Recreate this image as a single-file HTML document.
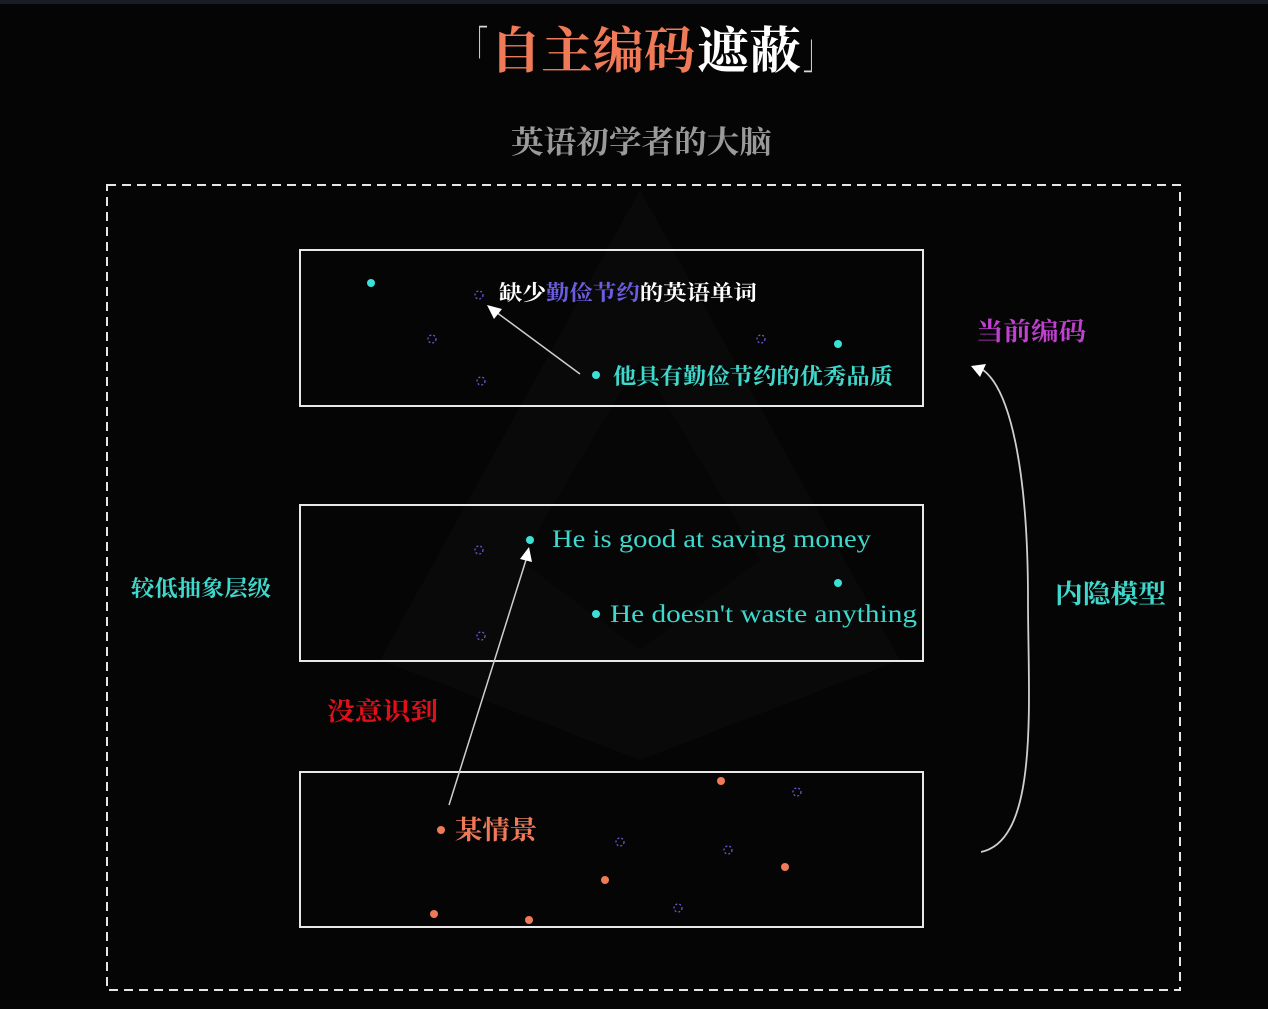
<!DOCTYPE html>
<html><head><meta charset="utf-8"><style>
html,body{margin:0;padding:0;background:#050505;}
svg{display:block}
text{font-family:"Liberation Serif","Noto Serif CJK SC",serif;font-weight:bold}
</style></head><body>
<svg width="1268" height="1009" viewBox="0 0 1268 1009" xmlns="http://www.w3.org/2000/svg">
<rect width="1268" height="1009" fill="#050505"/>
<rect width="1268" height="4" fill="#1a1d28"/>
<g fill="#090909">
<polygon points="640,190 900,660 640,760 380,660"/>
</g>
<g fill="#060606"><polygon points="640,360 760,560 640,650 520,560"/></g>
<text x="462" y="68" font-size="50" fill="#d8d8d8" style="font-weight:normal" textLength="26" lengthAdjust="spacingAndGlyphs">「</text>
<text x="490" y="68" font-size="50" fill="#f07a58" textLength="205" lengthAdjust="spacingAndGlyphs">自主编码</text>
<text x="697" y="68" font-size="50" fill="#ffffff" textLength="104" lengthAdjust="spacingAndGlyphs">遮蔽</text>
<text x="803" y="68" font-size="50" fill="#d8d8d8" style="font-weight:normal" textLength="26" lengthAdjust="spacingAndGlyphs">」</text>
<text x="511" y="153" font-size="31" fill="#9a9a9a" textLength="261" lengthAdjust="spacingAndGlyphs">英语初学者的大脑</text>
<rect x="107" y="185" width="1073" height="805" fill="none" stroke="#e6e6e6" stroke-width="2" stroke-dasharray="9,6"/>
<g fill="none" stroke="#e8e8e8" stroke-width="2">
<rect x="300" y="250" width="623" height="156"/>
<rect x="300" y="505" width="623" height="156"/>
<rect x="300" y="772" width="623" height="155"/>
</g>
<circle cx="371" cy="283" r="4" fill="#3de0d8"/>
<circle cx="838" cy="344" r="4" fill="#3de0d8"/>
<circle cx="596" cy="375" r="4" fill="#3de0d8"/>
<g fill="none" stroke="#6a5ad8" stroke-width="1.3" stroke-dasharray="2,2">
<circle cx="479" cy="295" r="4"/><circle cx="432" cy="339" r="4"/><circle cx="481" cy="381" r="4"/><circle cx="761" cy="339" r="4"/>
<circle cx="479" cy="550" r="4"/><circle cx="481" cy="636" r="4"/>
<circle cx="797" cy="792" r="4"/><circle cx="620" cy="842" r="4"/><circle cx="728" cy="850" r="4"/><circle cx="678" cy="908" r="4"/>
</g>
<text x="499" y="300" font-size="21" fill="#ffffff" textLength="258" lengthAdjust="spacingAndGlyphs">缺少<tspan fill="#6b5ce0">勤俭节约</tspan>的英语单词</text>
<text x="613" y="384" font-size="22" fill="#3fd8cc" textLength="280" lengthAdjust="spacingAndGlyphs">他具有勤俭节约的优秀品质</text>
<line x1="580" y1="374" x2="496" y2="312" stroke="#cfcfcf" stroke-width="1.5"/>
<polygon points="487,305 502,309 494,319" fill="#fff"/>
<circle cx="530" cy="540" r="4" fill="#3de0d8"/>
<circle cx="838" cy="583" r="4" fill="#3de0d8"/>
<circle cx="596" cy="614" r="4" fill="#3de0d8"/>
<text x="552" y="547" font-size="25" fill="#3fd8cc" style="font-weight:normal" textLength="319" lengthAdjust="spacingAndGlyphs">He is good at saving money</text>
<text x="610" y="622" font-size="25" fill="#3fd8cc" style="font-weight:normal" textLength="307" lengthAdjust="spacingAndGlyphs">He doesn't waste anything</text>
<line x1="449" y1="805" x2="526" y2="560" stroke="#cfcfcf" stroke-width="1.5"/>
<polygon points="529,547 532,562 520,559" fill="#fff"/>
<text x="327" y="720" font-size="25" fill="#e0101a" textLength="111" lengthAdjust="spacingAndGlyphs">没意识到</text>
<text x="131" y="596" font-size="22" fill="#3fd8cc" textLength="140" lengthAdjust="spacingAndGlyphs">较低抽象层级</text>
<g fill="#f07a58">
<circle cx="441" cy="830" r="4"/><circle cx="721" cy="781" r="4"/><circle cx="605" cy="880" r="4"/><circle cx="785" cy="867" r="4"/><circle cx="434" cy="914" r="4"/><circle cx="529" cy="920" r="4"/>
</g>
<text x="455" y="839" font-size="26" fill="#f07a58" textLength="82" lengthAdjust="spacingAndGlyphs">某情景</text>
<text x="976" y="340" font-size="25" fill="#c040d0" textLength="110" lengthAdjust="spacingAndGlyphs">当前编码</text>
<text x="1055" y="603" font-size="26" fill="#3fd8cc" textLength="111" lengthAdjust="spacingAndGlyphs">内隐模型</text>
<path d="M981,852 C1040,840 1028,700 1028,600 C1028,470 1010,385 980,368" fill="none" stroke="#cfcfcf" stroke-width="1.8"/>
<polygon points="971,366 986,364 980,377" fill="#fff"/>
</svg>
</body></html>
